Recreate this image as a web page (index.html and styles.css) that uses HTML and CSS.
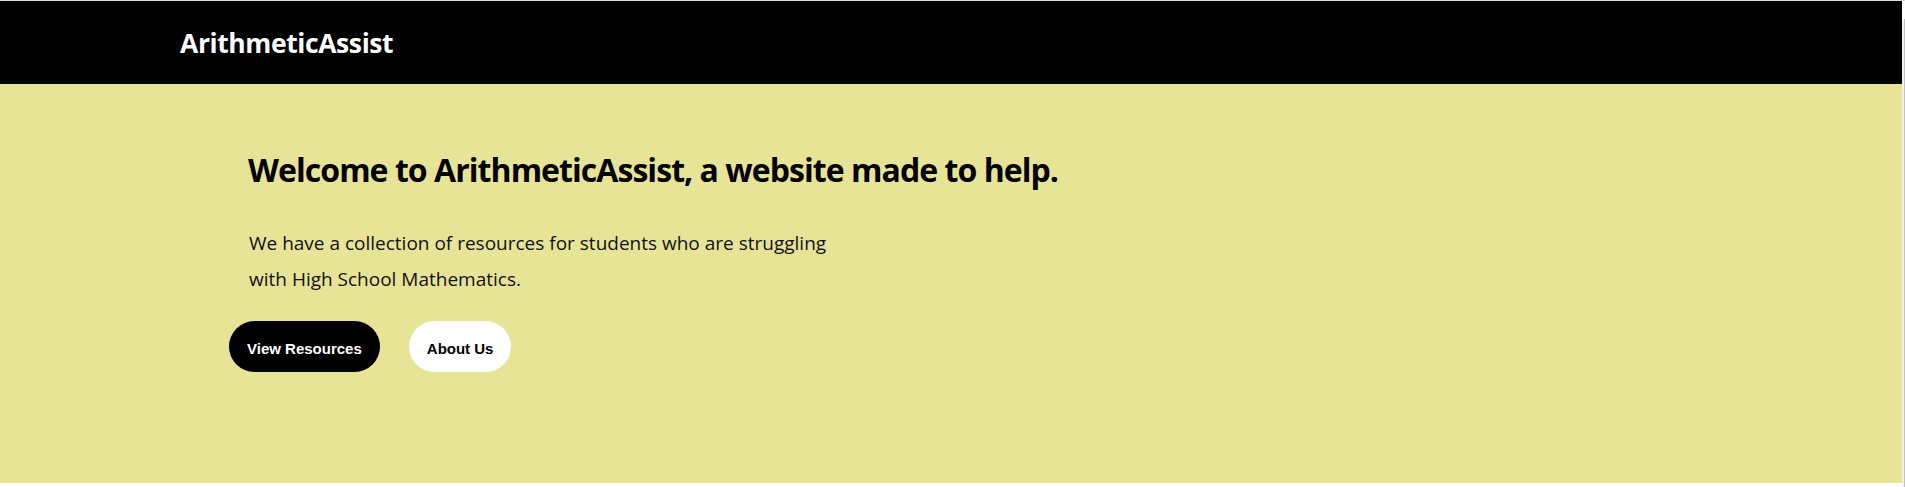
FILE: index.html
```html
<!DOCTYPE html>
<html lang="en">
<head>
<meta charset="utf-8">
<title>ArithmeticAssist</title>
<link rel="stylesheet" href="styles.css">
</head>
<body>
<div class="frame">
  <div class="page">
    <header class="topbar">
      <div class="brand">ArithmeticAssist</div>
    </header>
    <main class="hero">
      <h1 class="hero-title">Welcome to ArithmeticAssist, a website made to help.</h1>
      <p class="hero-text">We have a collection of resources for students who are struggling<br>with High School Mathematics.</p>
      <div class="actions">
        <a class="btn btn-dark" href="#">View Resources</a>
        <a class="btn btn-light" href="#">About Us</a>
      </div>
    </main>
  </div>
  <div class="scrollbar"></div>
</div>
</body>
</html>
```
FILE: styles.css
```css
html, body {
  margin: 0;
  padding: 0;
  background: #ffffff;
}
.frame {
  display: flex;
  border-top: 1px solid #dcdcdc;
}
.page {
  width: 1902px;
  flex: none;
}
.scrollbar {
  flex: 1;
  background: #f1f1f1;
  border-right: 1px solid #c2c2c2;
  margin-top: 18px;
  height: 470px;
}
.topbar {
  height: 83px;
  background: #000000;
  display: flex;
  align-items: center;
  padding-left: 180px;
}
.brand {
  font-family: "Open Sans", "Noto Sans", sans-serif;
  font-weight: 700;
  font-size: 26.5px;
  letter-spacing: -0.4px;
  color: #ffffff;
  padding-top: 1px;
}
.hero {
  background: #e7e497;
  height: 399px;
  box-sizing: border-box;
  padding: 66px 0 0 229px;
}
.hero-title {
  margin: 0 0 0 19px;
  font-family: "Open Sans", "Noto Sans", sans-serif;
  font-weight: 700;
  font-size: 32px;
  letter-spacing: -0.95px;
  line-height: 40px;
  color: #000000;
}
.hero-text {
  margin: 35px 0 0 20px;
  font-family: "Open Sans", "Noto Sans", sans-serif;
  font-weight: 400;
  font-size: 19px;
  line-height: 36px;
  color: #111111;
}
.actions {
  display: flex;
  gap: 29px;
  margin-top: 24px;
}
.btn {
  display: inline-flex;
  align-items: center;
  justify-content: center;
  height: 51px;
  box-sizing: border-box;
  padding: 3px 18px 0;
  border-radius: 26px;
  font-family: "Liberation Sans", Arial, sans-serif;
  font-weight: 700;
  font-size: 15px;
  text-decoration: none;
}
.btn-dark {
  background: #000000;
  color: #ffffff;
}
.btn-light {
  background: #ffffff;
  color: #000000;
}
```
